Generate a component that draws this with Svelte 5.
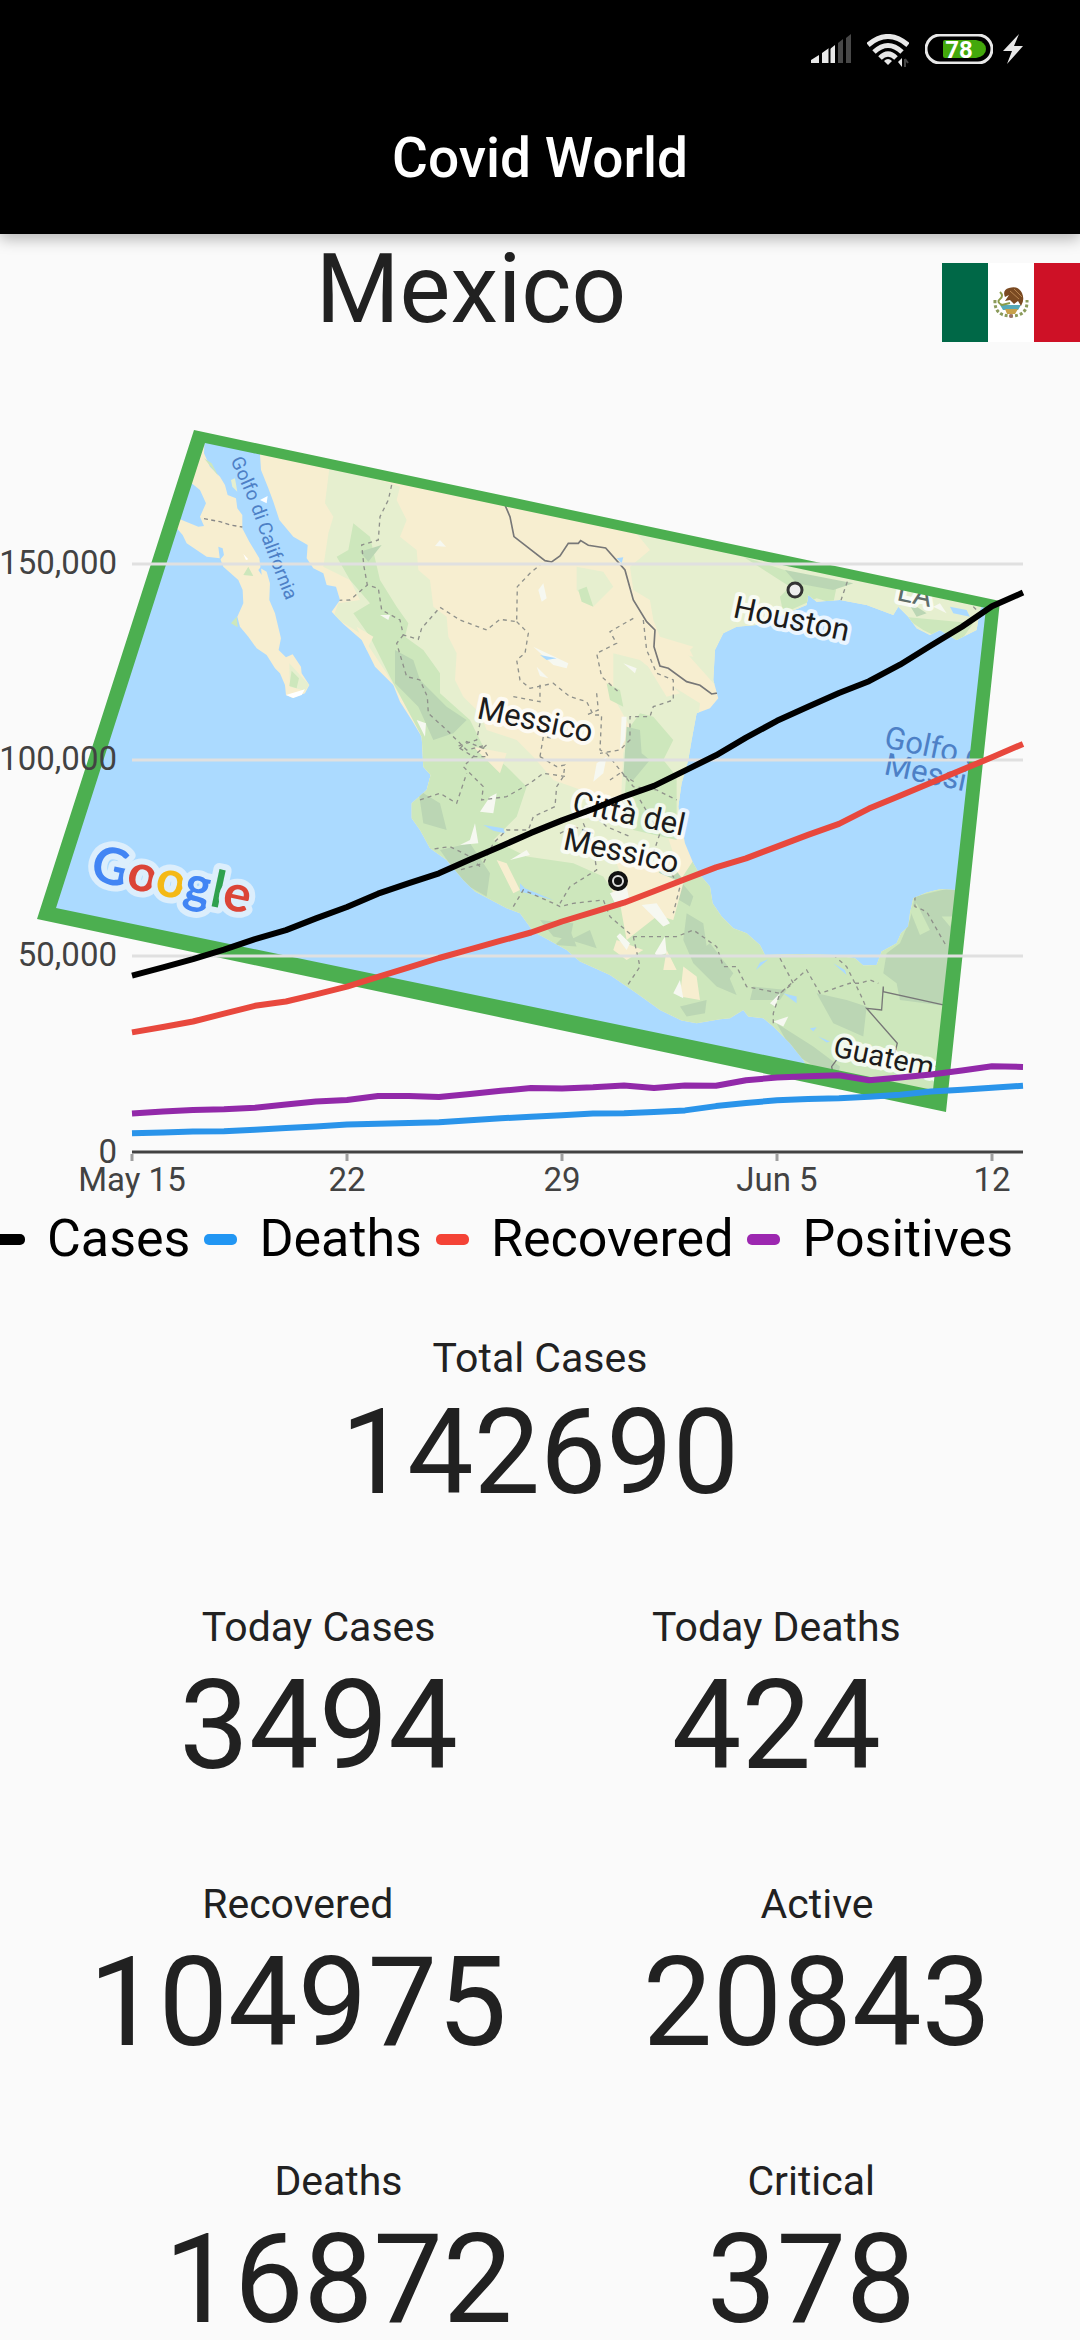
<script lang="ts">
  const left = 132;
  const right = 1023;
  const base = 1152;
  const perThousand = 3.92;

  const cases = [45, 47.1, 49.2, 51.6, 54.3, 56.6, 59.6, 62.5, 65.9, 68.6, 71.1, 74.6, 78, 81.4, 84.6, 87.5, 90.7, 93.4, 97.3, 101.2, 105.7, 110, 113.6, 117.1, 120.1, 124.3, 129.2, 134, 139.2, 142.7];
  const deaths = [4.8, 5, 5.2, 5.3, 5.7, 6.1, 6.5, 7, 7.2, 7.4, 7.6, 8.1, 8.6, 9, 9.4, 9.8, 9.9, 10.2, 10.6, 11.7, 12.5, 13.2, 13.5, 13.7, 14.1, 14.6, 15.4, 15.9, 16.4, 16.9];
  const recovered = [30.5, 31.9, 33.3, 35.3, 37.3, 38.4, 40.2, 42.2, 44.7, 47.1, 49.5, 51.7, 53.9, 56, 58.8, 61.2, 63.6, 66.5, 69.6, 72.6, 74.9, 77.9, 80.9, 83.7, 87.6, 90.9, 94.2, 97.5, 100.7, 104.1];
  const positives = [9.8, 10.3, 10.7, 10.9, 11.3, 12.1, 12.9, 13.3, 14.3, 14.3, 14, 14.8, 15.6, 16.3, 16.2, 16.5, 17, 16.3, 17, 16.9, 18.3, 19, 19.3, 19.6, 18.3, 19, 19.8, 20.8, 21.9, 21.7];

  const series = [
    { name: 'Deaths', kind: 'deaths', data: deaths },
    { name: 'Recovered', kind: 'recovered', data: recovered },
    { name: 'Positives', kind: 'positives', data: positives },
    { name: 'Cases', kind: 'cases', data: cases }
  ];
  const legend = [
    { name: 'Cases', kind: 'cases' },
    { name: 'Deaths', kind: 'deaths' },
    { name: 'Recovered', kind: 'recovered' },
    { name: 'Positives', kind: 'positives' }
  ];

  const points = (data: number[]) =>
    data
      .map((v, i) => `${Math.round(left + (i * (right - left)) / (data.length - 1))},${Math.round((base - v * perThousand) * 10) / 10}`)
      .join(' ');

  const yTicks = [
    { y: 564, label: '150,000' },
    { y: 760, label: '100,000' },
    { y: 956, label: '50,000' }
  ];
  const xTicks = [
    { x: 132, label: 'May 15' },
    { x: 347, label: '22' },
    { x: 562, label: '29' },
    { x: 777, label: 'Jun 5' },
    { x: 992, label: '12' }
  ];

  const rows = [
    { kind: 'wide', items: [{ label: 'Today Cases', value: '3494' }, { label: 'Today Deaths', value: '424' }] },
    { kind: 'tight', items: [{ label: 'Recovered', value: '104975' }, { label: 'Active', value: '20843' }] },
    { kind: 'wide', items: [{ label: 'Deaths', value: '16872' }, { label: 'Critical', value: '378' }] }
  ];
</script>

<div class="screen">
  <header>
    <div class="status">
      <svg class="signal" viewBox="0 0 41 30" aria-hidden="true">
        <path d="M0 29V26L8 21V29ZM11 29V19L18 14V29ZM19 29V15L24 11V29Z" fill="#e8e8e8" />
        <path d="M27 29V9L32 5V29ZM35 29V4L40 0V29Z" fill="#484848" />
        <path d="M9 10V30M18.500 8V30" stroke="#000" stroke-width="2" />
      </svg>
      <svg class="wifi" viewBox="0 0 42 34" aria-hidden="true">
        <g fill="none" stroke="#e8e8e8" stroke-width="5">
          <path d="M1 11Q21 -6 41 11" />
          <path d="M7 18Q21 5 35 18" />
          <path d="M13 24Q21 16 29 24" />
        </g>
        <path d="M17 27Q21 23 25 27L21 31Z" fill="#e8e8e8" />
        <path d="M31 28L35 24V33Z" fill="#e8e8e8" />
        <path d="M38 25V33M38 25L41 29" fill="none" stroke="#444" stroke-width="2" />
      </svg>
      <svg class="battery" viewBox="0 0 68 30" aria-label="Battery 78%">
        <rect x="1" y="1" width="66" height="28" rx="14" fill="#000" stroke="#e8e8e8" stroke-width="3" />
        <path d="M20 6H51Q61 8 61 15T51 24H20Q18 24 18 22V8Q18 6 20 6Z" fill="#43a80c" />
        <text x="34" y="24" text-anchor="middle">78</text>
      </svg>
      <svg class="bolt" viewBox="0 0 20 30" aria-hidden="true">
        <path d="M16 0L0 17H9L4 30L20 12H11Z" fill="#e8e8e8" />
      </svg>
    </div>
    <h1>Covid World</h1>
  </header>

  <main>
    <section class="country">
      <h2>Mexico</h2>
      <svg class="flag" viewBox="0 0 138 79" role="img" aria-label="Flag of Mexico">
        <rect width="138" height="79" fill="#fff" />
        <rect width="46" height="79" fill="#006847" />
        <rect x="92" width="46" height="79" fill="#ce1126" />
        <path d="M53 37Q52 53 69 53Q86 53 85 37" fill="none" stroke="#8b9b5b" stroke-width="3" stroke-dasharray="3 2" />
        <path d="M58 42H79L76 47H61Z" fill="#56a9b8" />
        <path d="M63 46H76L73 51H65Z" fill="#c8a14b" />
        <path d="M63 34Q60 27 67 25Q76 22 80 30Q83 37 79 43L76 38L72 41L68 37L63 38L67 32Z" fill="#7a4a22" />
        <path d="M68 28L77 36M72 26L80 34" stroke="#b58350" stroke-width="1" />
        <path d="M58 29Q62 33 58 36T60 42L68 40" fill="none" stroke="#8a9a48" stroke-width="2" />
        <circle cx="69" cy="53" r="2" fill="#9b6f66" />
      </svg>
    </section>

    <svg class="chart" viewBox="0 400 1080 800" role="img" aria-label="Cases, deaths, recovered and positives over a map of Mexico">
      <defs>
        <clipPath id="map-area"><path d="M200 437L993 605L940 1100L47 913Z" /></clipPath>
        <clipPath id="land-area">
          <path id="mainland" d="M-240 0V105L-237 150L-215 205L-200 245L-182 300L-140 350L-97 375L-100 415L-80 445L-50 460L-40 495L-12 500L0 540L-25 575L10 612L65 660L85 700L105 740L160 795L180 845L215 900L245 950L248 1000L250 1040L272 1065L260 1110L215 1150V1195L240 1230L270 1285L320 1320L370 1380L405 1415L500 1465L540 1480L580 1535L680 1590L720 1625L810 1665L890 1720L960 1770L1025 1802L1070 1810L1140 1798L1170 1795L1210 1770L1225 1790L1270 1795L1300 1820L1350 1870L1390 1920L1405 1945L1500 2100H1900L1845 1410L1800 1408L1760 1418L1720 1435L1710 1480L1705 1520L1683 1540L1670 1570L1625 1595L1610 1635L1570 1637L1545 1615L1480 1605L1380 1602L1275 1605L1260 1575L1220 1540L1180 1525L1145 1490L1118 1450L1110 1400L1080 1365L1060 1330L1035 1270L1015 1160L1025 1090L1045 1020L1055 960L1070 880L1110 865L1135 835L1120 780L1125 690L1150 640L1190 620L1250 615L1340 580L1400 555L1405 525L1430 545L1500 540L1580 555L1660 585L1675 560L1705 590L1730 625L1770 645L1800 630L1850 660L1910 630L1920 570L1950 500L1500 300L200 0Z" />
        </clipPath>
        <path id="gulf-line" d="M230 460Q248 497 258 527T288 605" />
      </defs>

      <g clip-path="url(#map-area)">
        <rect y="400" width="1080" height="760" fill="#abdaff" />

        <g transform="translate(0 420) scale(.3333)">
          <path fill="#f7eed0" d="M614 50L612 100L630 140L660 170L675 195L683 225L708 235L712 265L727 285V325L748 365L778 415L782 445L800 455L810 490L808 540L825 580L843 655L836 690L858 712L878 703L903 740L905 760L928 795L915 820L878 834L858 825L855 795L840 760L825 745L800 705L770 685L745 650L720 620L712 590L730 550L728 510L715 480L670 440L660 415L620 410L560 370L548 345L533 328L500 300L540 298L595 320L612 318L600 290L618 250L600 210L575 190L540 150Z" />
          <path fill="#e6efcf" d="M868 730L905 770L928 795L915 812L870 800ZM693 180L705 175L712 215L697 200Z" />
          <path fill="#cde7bc" d="M875 752L897 775L890 805L868 798ZM730 465L745 440L760 468ZM693 610L710 590L713 622ZM612 115L635 130L655 168Z" />
          <path fill="#fff" d="M780 240L803 228L800 250ZM858 825L915 808L905 825L880 834ZM730 402L745 418L738 420Z" />
          <path fill="#abdaff" d="M655 380L668 385L672 405L660 420ZM775 450L783 440L785 465Z" />
          <path fill="none" stroke="#888" stroke-width="4" stroke-dasharray="12 10" d="M612 296L660 305L690 315L727 321" />
        </g>

        <g transform="translate(340 420) scale(.3333)">
          <use href="#mainland" fill="#f7eed0" />
          <g clip-path="url(#land-area)">
            <g fill="#e6efcf">
              <path d="M-30 130L180 200L170 240L200 300L180 350L230 390L235 450L270 480L280 560L320 590L325 650L350 700L345 780L370 830L420 880L440 930L530 960L580 1010L640 1080L780 1130L830 1180L960 1180L1000 1300L720 1450L400 1300L240 1100L240 930L140 760L60 640L-20 590L-5 550L60 540L30 480L-50 440L-35 340L-20 290L-45 250Z" />
              <path d="M840 280L1600 330L2000 500L1900 700L1150 650L1130 800L1040 700L1060 680L960 650L940 600L930 540L880 510L870 440L930 390Z" />
              <path d="M710 440L790 455L820 500L760 560L710 510ZM820 700L900 720L1000 800L1080 850L1050 1130L1020 1250L840 1200L850 1000L870 920L820 830Z" />
            </g>
            <g fill="#cde7bc">
              <path d="M40 310L90 350L120 480L170 560L205 610L195 650L250 690L300 760L300 820L390 900L430 980L500 1040L560 1100L530 1190L460 1260L560 1310L700 1330L790 1370L840 1450L860 1560L950 1490L1100 1260L1300 1500L1900 1350V2200H1300L900 1850L500 1550L200 1250L220 1090L240 940L150 770L90 650L40 580L90 550L30 480L-10 410L25 390Z" />
              <path d="M715 510L740 500L760 560L725 545ZM800 790L840 810L850 860L810 840ZM870 920L900 880L940 890L1000 960L970 1020L1010 1070V1260L880 1230L850 1180ZM1210 410L1490 500L1480 550L1430 535L1330 580L1320 530L1350 500ZM1690 590L1900 610L1850 680L1750 630Z" />
            </g>
            <g fill="#bbd6b4">
              <path d="M165 690L220 720L240 780L320 860L380 900L340 940L280 960L235 860L165 790ZM860 920L900 930L905 1000L930 1020L880 1080L850 1070ZM235 1110L300 1150L320 1230L250 1210ZM300 1290L390 1270L450 1360L440 1430L370 1390ZM600 1500L700 1510L690 1560L640 1550ZM1040 1480L1090 1510L1100 1580L1150 1630L1190 1725L1130 1700L1060 1630L1030 1560ZM920 1370L1000 1340L1030 1380L990 1410ZM1020 1760L1100 1740L1095 1780L1040 1790ZM1010 1370L1060 1430L1050 1460L1000 1430Z" />
              <path d="M1725 1430L1850 1400L1830 1760L1680 1740L1670 1690L1630 1660L1640 1600L1680 1570L1710 1500ZM1240 1700L1340 1710L1320 1740L1230 1740ZM1430 1720L1520 1740L1580 1760L1570 1850L1480 1810ZM1310 1810L1420 1880L1500 1940L1490 1980L1360 1900ZM1335 450L1540 490L1480 510L1370 490ZM1700 540L1760 580L1730 590Z" />
              <path d="M60 395L125 375L85 425ZM645 1575L690 1530L710 1580ZM690 1560L750 1530L770 1585ZM1110 1570L1180 1660L1160 1690L1070 1600Z" />
            </g>
            <g fill="#f7eed0">
              <path d="M900 1310L960 1360L1030 1390L1000 1500L930 1480L870 1440L830 1330ZM1030 1640L1070 1670L1080 1740L1020 1730ZM470 1320L500 1330L540 1410L520 1420ZM920 640L1050 690L1060 710L960 690ZM900 700L1020 820L980 830ZM400 980L500 1000L480 1060ZM50 620L100 650L80 690ZM830 1560L910 1590L860 1620L820 1590ZM980 1590L1010 1650L970 1650Z" />
              <path d="M1710 1470L1730 1450L1770 1530L1740 1545ZM1805 1490L1840 1490L1830 1520Z" fill="#cde7bc" />
            </g>
            <g fill="#f6f8f1">
              <path d="M580 680L685 730L680 745L640 735ZM590 740L625 775L600 768ZM595 510L610 490L620 535L605 545ZM285 378L300 360L318 380ZM230 900L258 910L255 950ZM450 1130L470 1120L460 1180L420 1175ZM390 1260L405 1210L415 1270L360 1275ZM510 1320L560 1290L570 1305ZM770 1030L800 1010L790 1060L760 1085ZM810 1420L860 1400L870 1450L830 1460ZM905 1455L950 1450L990 1510L970 1520ZM945 1600L975 1550L980 1600L950 1610ZM1000 1720L1020 1680L1030 1735ZM845 890L860 890L855 960L840 990ZM120 585L150 585L145 600ZM1290 1750L1320 1720L1305 1760ZM1300 1805L1345 1790L1330 1820ZM850 730L890 745L885 760ZM830 1550L860 1590L870 1570L840 1540ZM1780 560L1800 550L1820 580Z" />
            </g>
            <g fill="#abdaff">
              <path d="M430 1215L490 1225L495 1240L460 1232ZM600 705L650 715L620 720ZM830 415L850 412L845 430ZM540 1390L555 1405L640 1440L540 1415ZM1248 1650L1260 1628L1285 1618L1265 1635ZM1330 1720L1370 1730L1370 1750ZM1410 1825L1430 1822L1420 1835ZM1435 1850L1470 1865L1460 1868ZM1480 1630L1515 1650L1520 1665ZM1830 560L1880 570L1890 590L1840 580Z" />
            </g>
            <g fill="none" stroke="#8f918b" stroke-width="4" stroke-dasharray="12 12">
              <path d="M155 195L145 240L120 290L115 360L65 375L72 440L82 495L115 505L125 570L180 600L190 645L235 658L245 625L300 562L360 600L440 630L480 598L530 605L532 500L570 460L600 435" />
              <path d="M-5 541L30 540L82 495M190 645L170 670L200 770L240 780L262 830L265 880L320 930L380 990L440 975L410 1000L370 1040L430 1100L425 1140L500 1130L570 1090L610 1060L680 1070M530 605L565 640L555 700L530 720L540 780L570 805L640 790L690 830L740 845L760 885L785 885L780 990L800 1000" />
              <path d="M520 830L600 845L600 790M880 595L810 635L830 670L770 700L785 770L840 820M910 600L920 690L950 760L1000 780L1000 840L940 860L930 890L870 890L870 960L840 990L780 1000M770 820L775 870L740 885M420 910L410 960L350 980M600 1010L610 950L640 955M600 1010L650 1040L675 1035L670 1070L650 1100L645 1160L580 1190L565 1230L500 1230L460 1270L430 1330L360 1350M240 1140L300 1120L350 1150L380 1060" />
              <path d="M260 1290L330 1280L390 1310L420 1340M520 1460L550 1410L640 1450L660 1460L700 1450L790 1440L810 1490L880 1550L1010 1550L1060 1530L1130 1580L1150 1640L1190 1640L1220 1700L1320 1720L1300 1780L1300 1830M880 1550L900 1640L860 1700M1320 1615L1360 1690L1320 1720L1400 1650L1440 1720L1530 1690L1560 1690L1590 1680L1615 1690M1480 1605L1520 1640L1560 1720L1580 1765M1725 1430V1460L1760 1475L1820 1580M800 1000L880 1100L950 1110L1010 1140M900 1140L960 1240L940 1300L980 1340L1020 1400L1000 1480M740 1160L800 1220L870 1250M730 1210L760 1280L770 1350L690 1400L660 1450M1522 485L1500 550M1900 560L1920 580" />
              <path d="M360 985L380 965L430 985L445 1010L400 1010ZM810 1080L840 1060L890 1090M660 1240L700 1220L760 1240" />
            </g>
            <g fill="none" stroke="#777" stroke-width="5">
              <path d="M495 255L510 290L522 350L615 422L635 426L660 408L685 370L715 370L722 362L745 376L797 384L855 450L880 540L920 605L945 630L942 680L960 738L985 745L1040 785L1080 796L1115 822L1140 818" />
              <path d="M1810 1755L1630 1715L1630 1700L1625 1770L1580 1765L1672 1870L1665 1900M1490 1920L1475 1940L1480 1965" stroke-width="4" />
            </g>
          </g>
        </g>

        <g class="map-label">
          <text transform="translate(476 718) rotate(12)">Messico</text>
          <text transform="translate(732 617) rotate(12)">Houston</text>
          <text transform="translate(571 812) rotate(12)">Città del</text>
          <text transform="translate(562 849) rotate(12)">Messico</text>
          <text class="small" transform="translate(832 1056) rotate(12)">Guatemala</text>
          <text class="small state" transform="translate(896 600) rotate(12)">LA</text>
        </g>
        <g class="sea-label">
          <text transform="translate(883 747) rotate(12)">Golfo del</text>
          <text transform="translate(883 774) rotate(12)">Messico</text>
          <text class="gulf"><textPath href="#gulf-line">Golfo di California</textPath></text>
        </g>
        <circle cx="795" cy="590" r="7" fill="#eee" stroke="#333" stroke-width="3" />
        <circle cx="618" cy="881" r="8" fill="#ddd" stroke="#111" stroke-width="4" />
        <circle cx="618" cy="881" r="4" fill="#111" />
        <text class="brand" transform="translate(89 880) rotate(12)"><tspan class="b">G</tspan><tspan class="r">o</tspan><tspan class="y">o</tspan><tspan class="b">g</tspan><tspan class="g">l</tspan><tspan class="r">e</tspan></text>
      </g>
      <path fill="#4caf50" fill-rule="evenodd" d="M194 430L1000 601L946 1112L37 919ZM205 443L56 908L933 1090L986 608Z" />

      <g class="grid">
        {#each yTicks as tick}
          <line x1={left} x2={right} y1={tick.y} y2={tick.y} />
        {/each}
      </g>
      <line class="axis" x1={left} x2={right} y1={base} y2={base} />
      <g class="ticks">
        {#each xTicks as tick}
          <line x1={tick.x} x2={tick.x} y1="1154" y2="1161" />
        {/each}
      </g>
      {#each series as line}
        <polyline class="line {line.kind}" points={points(line.data)} />
      {/each}
      <g class="axis-label">
        {#each yTicks as tick}
          <text x="117" y={tick.y + 10} text-anchor="end">{tick.label}</text>
        {/each}
        <text x="117" y="1163" text-anchor="end">0</text>
        {#each xTicks as tick}
          <text x={tick.x} y="1191" text-anchor="middle">{tick.label}</text>
        {/each}
      </g>
    </svg>

    <ul class="legend">
      {#each legend as entry}
        <li><span class="mark {entry.kind}"></span>{entry.name}</li>
      {/each}
    </ul>

    <dl class="stats">
      <div class="row">
        <div class="stat total">
          <dt>Total Cases</dt>
          <dd>142690</dd>
        </div>
      </div>
      {#each rows as row}
        <div class="row {row.kind}">
          {#each row.items as item}
            <div class="stat">
              <dt>{item.label}</dt>
              <dd>{item.value}</dd>
            </div>
          {/each}
        </div>
      {/each}
    </dl>
  </main>
</div>

<style>
  :global(body) {
    margin: 0;
    background: #fafafa;
  }
  .screen {
    display: flex;
    flex-direction: column;
    height: 100vh;
    background: #fafafa;
    color: #212121;
    font-family: Roboto, "Liberation Sans", sans-serif;
  }
  header {
    position: relative;
    z-index: 1;
    flex: none;
    background: #000;
    color: #fff;
    box-shadow: 0 5px 14px rgba(0, 0, 0, 0.28);
  }
  .status {
    display: flex;
    justify-content: flex-end;
    align-items: flex-start;
    box-sizing: border-box;
    height: 82px;
    padding: 34px 57px 0 0;
  }
  .signal {
    width: 41px;
    height: 30px;
    margin-right: 15px;
  }
  .wifi {
    width: 42px;
    height: 34px;
    margin-right: 16px;
  }
  .battery {
    width: 68px;
    height: 30px;
    margin-right: 10px;
  }
  .battery text {
    font-size: 24px;
    font-weight: 700;
    fill: #fff;
  }
  .bolt {
    width: 20px;
    height: 30px;
  }
  h1 {
    margin: 0;
    height: 152px;
    line-height: 152px;
    font-size: 55px;
    font-weight: 500;
    text-align: center;
  }
  main {
    flex: 1;
    min-height: 0;
    overflow: hidden auto;
    scrollbar-width: none;
  }
  .country {
    display: flex;
    align-items: flex-start;
    height: 166px;
  }
  h2 {
    flex: 1;
    margin: 0;
    font-size: 96px;
    font-weight: 400;
    line-height: 110px;
    text-align: center;
  }
  .flag {
    width: 138px;
    height: 79px;
    margin-top: 29px;
  }
  .chart {
    display: block;
    width: 100%;
  }
  .map-label,
  .sea-label {
    font-size: 31px;
  }
  .map-label {
    fill: #1c1c1c;
    stroke: #fff;
    stroke-opacity: 0.75;
    stroke-width: 8px;
    stroke-linejoin: round;
    paint-order: stroke;
  }
  .map-label .small {
    font-size: 29px;
  }
  .map-label .state {
    fill: #5e6d69;
  }
  .sea-label {
    fill: #4d80c6;
  }
  .sea-label .gulf {
    font-size: 19px;
  }
  .brand {
    font-family: Lato, Roboto, sans-serif;
    font-size: 51px;
    font-weight: 700;
    stroke: #dceefc;
    stroke-width: 12px;
    stroke-linejoin: round;
    paint-order: stroke;
  }
  .brand .b {
    fill: #4285f4;
  }
  .brand .r {
    fill: #db4437;
  }
  .brand .y {
    fill: #f4b916;
  }
  .brand .g {
    fill: #2fa14f;
  }
  .grid line {
    stroke: #e0e0e0;
    stroke-width: 3px;
  }
  .axis {
    stroke: #424242;
    stroke-width: 3px;
  }
  .ticks line {
    stroke: #9e9e9e;
    stroke-width: 3px;
  }
  .line {
    fill: none;
    stroke-width: 6px;
    stroke-linejoin: round;
  }
  .line.cases {
    stroke: #000;
  }
  .line.deaths {
    stroke: #2a94ea;
  }
  .line.recovered {
    stroke: #e8483d;
  }
  .line.positives {
    stroke: #9229a9;
  }
  .axis-label {
    font-size: 33px;
    fill: #424242;
  }
  .legend {
    display: flex;
    gap: 14px;
    margin: 9px 0 0 -8px;
    padding: 0;
    list-style: none;
    color: #000;
    font-size: 52px;
    line-height: 60px;
    white-space: nowrap;
  }
  .legend li {
    display: flex;
    align-items: center;
    gap: 22px;
  }
  .mark {
    width: 33px;
    height: 11px;
    border-radius: 5px;
  }
  .mark.cases {
    background: #000;
  }
  .mark.deaths {
    background: #2196f3;
  }
  .mark.recovered {
    background: #f44336;
  }
  .mark.positives {
    background: #9c27b0;
  }
  .stats {
    display: flex;
    flex-direction: column;
    gap: 81px;
    margin: 65px 0 0;
  }
  .row {
    display: flex;
    justify-content: center;
  }
  .row.wide {
    gap: 194px;
  }
  .row.tight {
    gap: 136px;
  }
  .stat {
    display: flex;
    flex-direction: column;
    align-items: center;
    gap: 2px;
  }
  dt {
    font-size: 41px;
    line-height: 48px;
  }
  dd {
    margin: 0;
    font-size: 124px;
    line-height: 146px;
  }
  .total dd {
    font-size: 118px;
    line-height: 138px;
  }
</style>
